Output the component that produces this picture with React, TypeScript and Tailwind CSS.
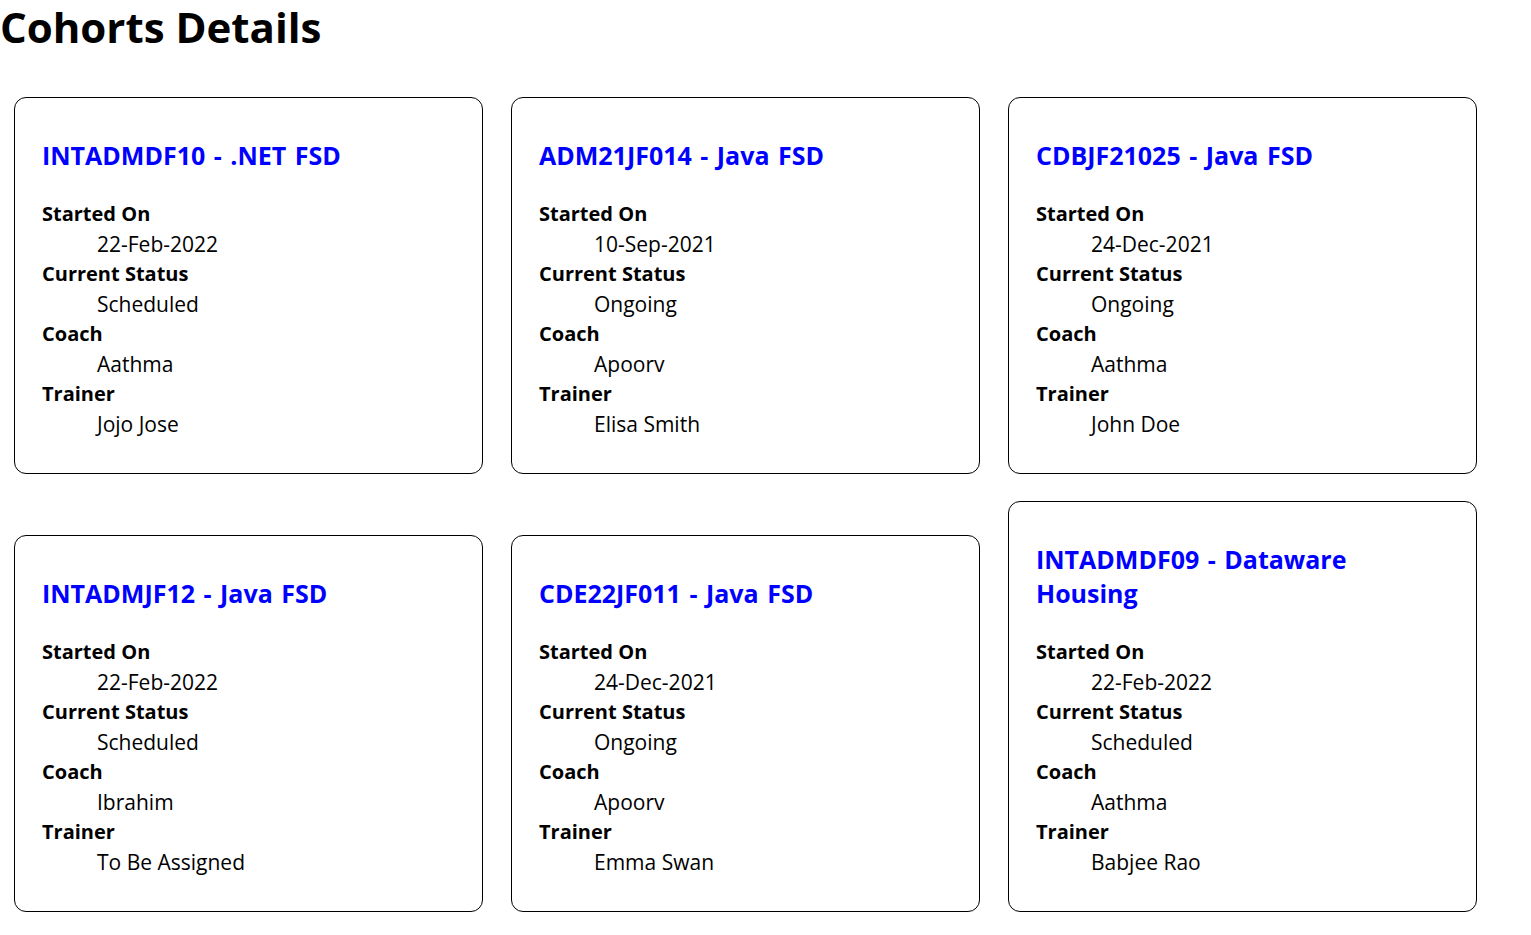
import React from "react";

type Cohort = {
  code: string;
  name: string;
  startedOn: string;
  status: string;
  coach: string;
  trainer: string;
};

const cohorts: Cohort[] = [
  { code: "INTADMDF10", name: ".NET FSD", startedOn: "22-Feb-2022", status: "Scheduled", coach: "Aathma", trainer: "Jojo Jose" },
  { code: "ADM21JF014", name: "Java FSD", startedOn: "10-Sep-2021", status: "Ongoing", coach: "Apoorv", trainer: "Elisa Smith" },
  { code: "CDBJF21025", name: "Java FSD", startedOn: "24-Dec-2021", status: "Ongoing", coach: "Aathma", trainer: "John Doe" },
  { code: "INTADMJF12", name: "Java FSD", startedOn: "22-Feb-2022", status: "Scheduled", coach: "Ibrahim", trainer: "To Be Assigned" },
  { code: "CDE22JF011", name: "Java FSD", startedOn: "24-Dec-2021", status: "Ongoing", coach: "Apoorv", trainer: "Emma Swan" },
  { code: "INTADMDF09", name: "Dataware Housing", startedOn: "22-Feb-2022", status: "Scheduled", coach: "Aathma", trainer: "Babjee Rao" },
];

const CohortCard = ({ cohort }: { cohort: Cohort }) => {
  const rows: [string, string][] = [
    ["Started On", cohort.startedOn],
    ["Current Status", cohort.status],
    ["Coach", cohort.coach],
    ["Trainer", cohort.trainer],
  ];
  return (
    <div className="w-[469px] border border-black rounded-[12px] pl-[27px] pr-[27px] pt-[40px] pb-[34px]">
      <h3 className="text-[25px] leading-[34px] font-bold text-[#0000ff] [word-spacing:2px] max-w-[380px] mb-[27px]">
        {cohort.code} - {cohort.name}
      </h3>
      <dl className="leading-[30px] text-black">
        {rows.map(([label, value]) => (
          <React.Fragment key={label}>
            <dt className="text-[20px] font-bold">{label}</dt>
            <dd className="text-[21px] ml-[55px]">{value}</dd>
          </React.Fragment>
        ))}
      </dl>
    </div>
  );
};

export default function App() {
  return (
    <div className="min-h-screen bg-white text-black" style={{ fontFamily: '"Open Sans", "Noto Sans", sans-serif' }}>
      <h1 className="text-[42px] leading-[53px] font-bold mb-[44px]">Cohorts Details</h1>
      <div className="flex flex-wrap items-end gap-x-[28px] gap-y-[27px] pl-[14px]">
        {cohorts.map((c) => (
          <CohortCard key={c.code} cohort={c} />
        ))}
      </div>
    </div>
  );
}
